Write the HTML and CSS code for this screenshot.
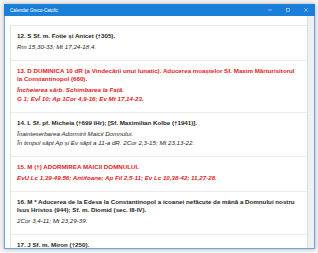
FILE: index.html
```html
<!DOCTYPE html>
<html lang="ro">
<head>
<meta charset="utf-8">
<title>Calendar Greco-Catolic</title>
<link rel="stylesheet" href="styles.css">
</head>
<body>
<div class="window">
  <div class="titlebar">
    <span class="title">Calendar Greco-Catolic</span>
    <div class="controls">
      <span class="btn"><svg width="5" height="5" viewBox="0 0 5 5"><path d="M0 2.5H5" stroke="#fff" stroke-width="0.6"/></svg></span>
      <span class="btn"><svg width="5" height="5" viewBox="0 0 5 5"><rect x="0.5" y="0.5" width="4" height="4" fill="none" stroke="#fff" stroke-width="0.6"/></svg></span>
      <span class="btn"><svg width="5" height="5" viewBox="0 0 5 5"><path d="M0.3 0.3L4.7 4.7M4.7 0.3L0.3 4.7" stroke="#fff" stroke-width="0.6"/></svg></span>
    </div>
  </div>
  <div class="frame">
    <div class="main">
      <div class="panel">
        <div class="entry">
          <div class="head">12. S Sf. m. Fotie și Anicet (†305).</div>
          <div class="sub">Rm 15,30-33; Mt 17,24-18,4.</div>
        </div>
        <div class="entry red">
          <div class="head">13. D DUMINICA 10 dR (a Vindecării unui lunatic). Aducerea moaștelor Sf. Maxim Mărturisitorul<br>la Constantinopol (680).</div>
          <div class="sub">Încheierea sărb. Schimbarea la Față.</div>
          <div class="sub">G 1; EvÎ 10; Ap 1Cor 4,9-16; Ev Mt 17,14-23.</div>
        </div>
        <div class="entry">
          <div class="head">14. L Sf. pf. Micheia (†699 îHr); [Sf. Maximilian Kolbe (†1941)].</div>
          <div class="sub">Înainteserbarea Adormirii Maicii Domnului.</div>
          <div class="sub">În timpul săpt Ap și Ev săpt a 11-a dR. 2Cor 2,3-15; Mt 23,13-22.</div>
        </div>
        <div class="entry red">
          <div class="head">15. M (†) ADORMIREA MAICII DOMNULUI.</div>
          <div class="sub">EvU Lc 1,39-49.56; Antifoane; Ap Fil 2,5-11; Ev Lc 10,38-42; 11,27-28.</div>
        </div>
        <div class="entry">
          <div class="head">16. M * Aducerea de la Edesa la Constantinopol a icoanei nefăcute de mână a Domnului nostru<br>Isus Hristos (944); Sf. m. Diomid (sec. III-IV).</div>
          <div class="sub">2Cor 3,4-11; Mt 23,29-39.</div>
        </div>
        <div class="entry">
          <div class="head">17. J Sf. m. Miron (†250).</div>
        </div>
      </div>
    </div>
    <div class="scroll"></div>
  </div>
</div>
</body>
</html>
```

FILE: styles.css
```css
html, body {
  margin: 0;
  padding: 0;
  background: #f4f4f4;
  overflow: hidden;
}
body {
  width: 318px;
  height: 253px;
}
.window {
  margin: 4px 0 0 4px;
  width: 311px;
  height: 245px;
  display: flex;
  flex-direction: column;
  background: #fff;
  box-shadow: 0 0 4px rgba(0, 0, 0, 0.28);
}
.titlebar {
  height: 12px;
  flex: none;
  background: #1a7fd9;
  display: flex;
  align-items: center;
  padding-left: 6px;
}
.title {
  font-family: "Liberation Sans", Arial, sans-serif;
  font-size: 4.6px;
  color: #fff;
  flex: 1;
}
.controls {
  display: flex;
  height: 100%;
}
.btn {
  width: 18px;
  display: flex;
  align-items: center;
  justify-content: center;
}
.btn svg {
  width: 4px;
  height: 4px;
}
.frame {
  flex: 1;
  display: flex;
  min-height: 0;
  border: 1px solid #6aa7e6;
  border-top: none;
}
.main {
  flex: 1;
  padding: 9px 0 0 5px;
  overflow: hidden;
}
.panel {
  border-left: 1px solid #e3e3e3;
  border-top: 1px solid #e6e6e6;
  height: 100%;
  font-family: "Liberation Sans", Arial, sans-serif;
  color: #1e1e1e;
}
.entry {
  padding: 6px 0 9.5px 6px;
  border-bottom: 1px solid #ececec;
}
.head {
  font-size: 6.2px;
  font-weight: bold;
  line-height: 8.5px;
}
.sub {
  font-size: 6.2px;
  font-style: italic;
  line-height: 6.5px;
  margin-top: 3px;
}
.red {
  color: #e02222;
}
.red .sub {
  font-weight: bold;
}
.scroll {
  width: 6px;
  flex: none;
  background: #eef0f3;
  border-left: 1px solid #dcdcdc;
}
```
